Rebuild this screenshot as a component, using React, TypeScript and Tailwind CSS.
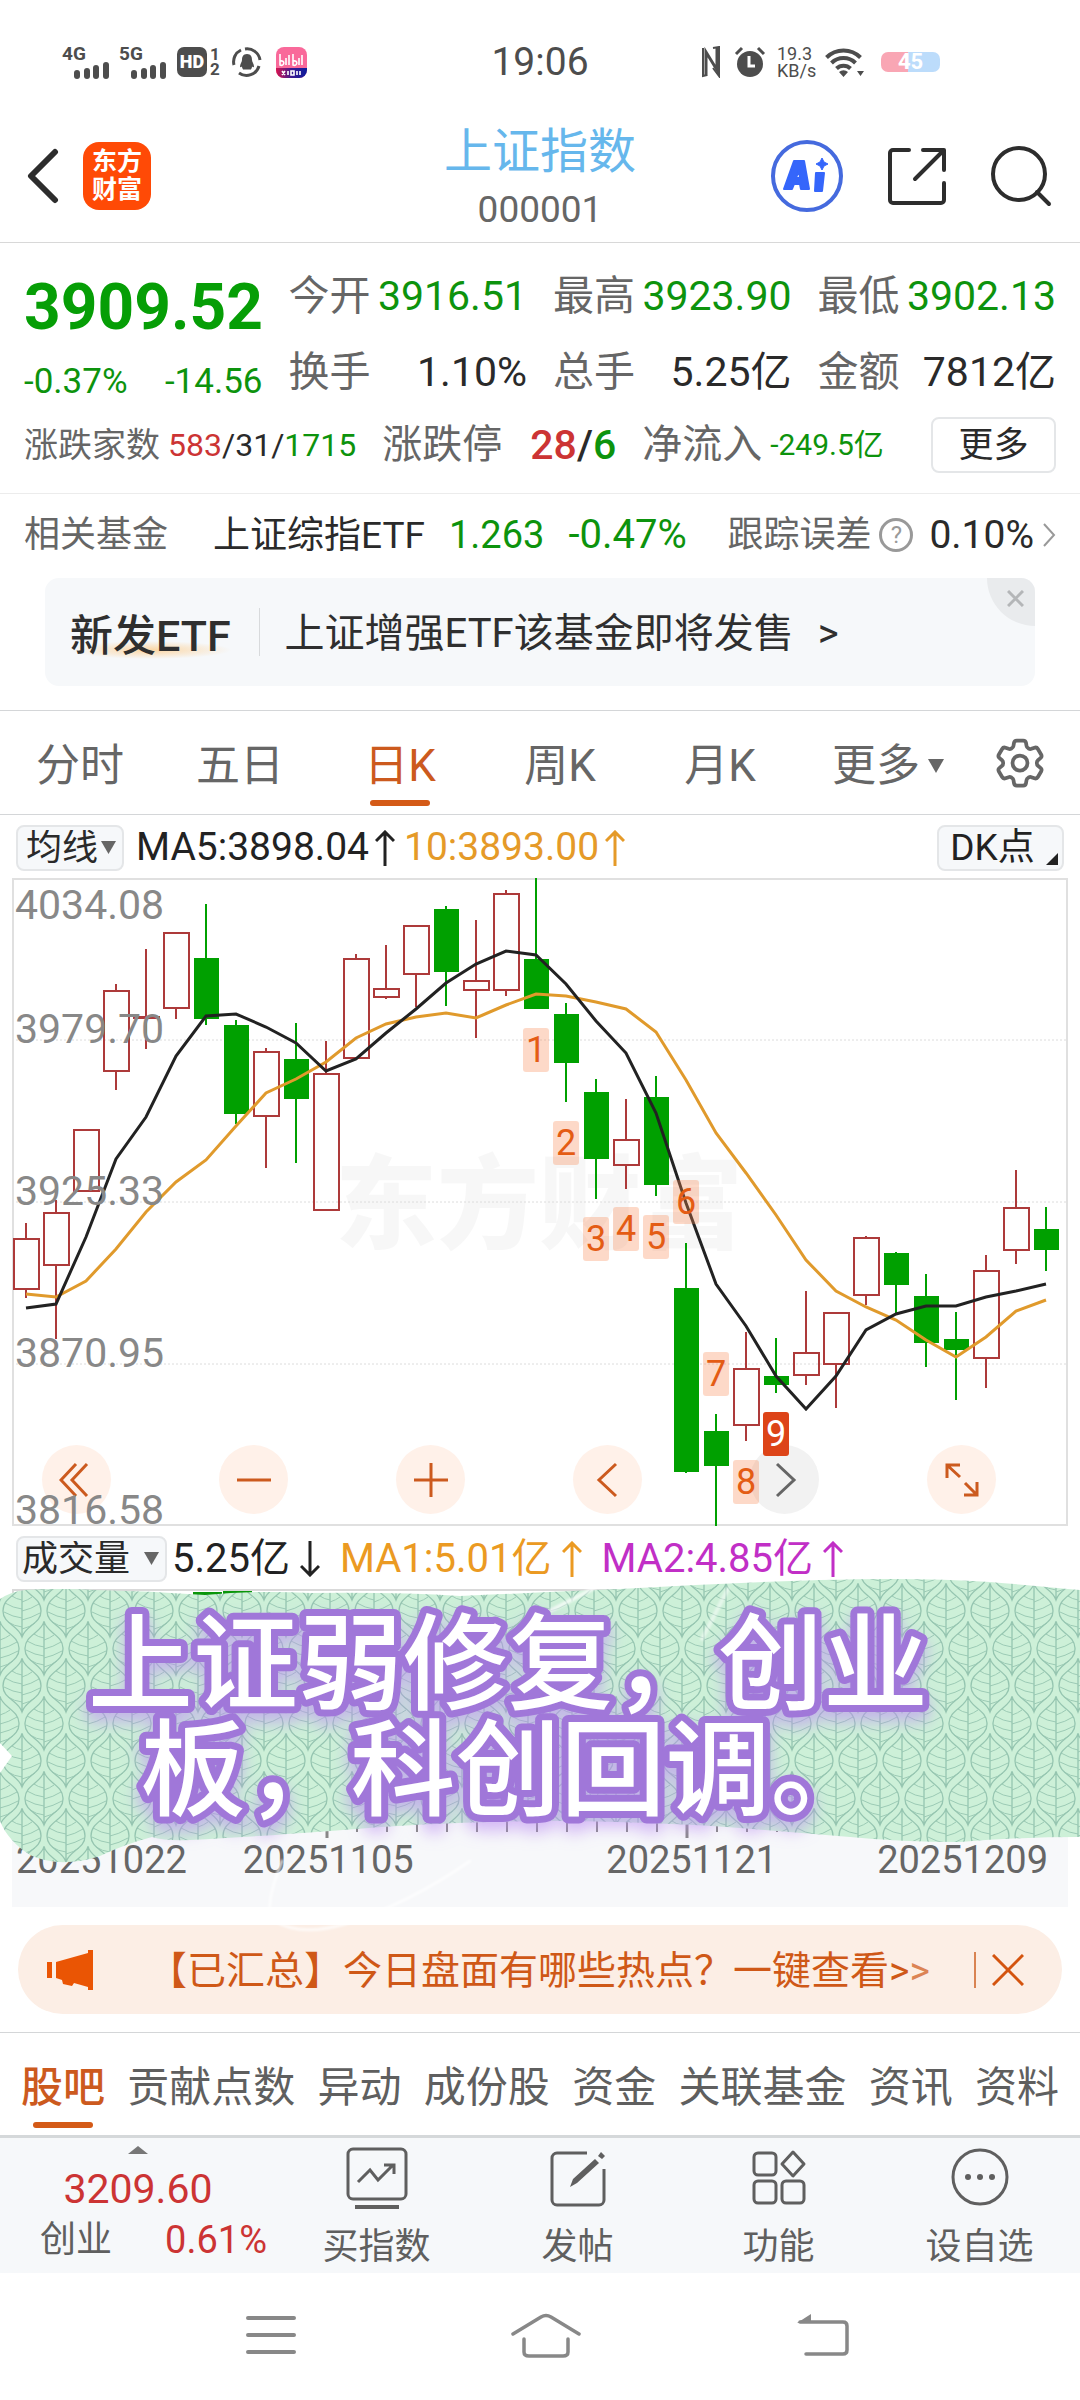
import React, { useState } from 'react'
import { HiOutlineCog6Tooth } from 'react-icons/hi2'

const GREEN = '#00a000'
const RED = '#ad3a3a'

const STEP = 30
const FIRST_X = 14

type Candle = { up: boolean; high: number; top: number; bottom: number; low: number }

const c = (up: boolean, high: number, top: number, bottom: number, low: number): Candle => ({
  up,
  high,
  top,
  bottom,
  low
})

const candles: Candle[] = [
  c(true, 345, 360, 412, 420),
  c(true, 322, 334, 388, 461),
  c(true, 251, 251, 314, 314),
  c(true, 106, 112, 194, 212),
  c(true, 71, 138, 141, 171),
  c(true, 54, 54, 131, 141),
  c(false, 26, 80, 141, 147),
  c(false, 142, 147, 236, 246),
  c(true, 170, 173, 239, 290),
  c(false, 145, 181, 221, 285),
  c(true, 163, 195, 333, 333),
  c(true, 76, 80, 181, 181),
  c(true, 67, 110, 120, 121),
  c(true, 47, 47, 97, 129),
  c(false, 28, 31, 94, 128),
  c(true, 42, 102, 113, 160),
  c(true, 12, 15, 113, 118),
  c(false, 0, 81, 131, 131),
  c(false, 125, 136, 185, 224),
  c(false, 201, 214, 281, 321),
  c(true, 221, 261, 288, 311),
  c(false, 198, 219, 307, 318),
  c(false, 365, 410, 594, 595),
  c(false, 536, 553, 588, 648),
  c(true, 454, 490, 548, 563),
  c(false, 460, 498, 507, 515),
  c(true, 413, 474, 498, 507),
  c(true, 434, 434, 487, 530),
  c(true, 358, 359, 418, 427),
  c(false, 374, 375, 407, 435),
  c(false, 396, 418, 465, 489),
  c(false, 434, 461, 472, 522),
  c(true, 377, 392, 481, 510),
  c(true, 292, 329, 373, 386),
  c(false, 329, 351, 372, 393)
]

const ma5 = [
  430, 426, 359, 281, 239, 178, 138, 136, 149, 165, 193, 181, 155, 131, 105, 86, 73, 77, 106, 143, 175, 235, 325,
  406, 448, 498, 531, 498, 452, 436, 428, 428, 419, 413, 406
]

const ma10 = [
  416, 419, 403, 371, 334, 304, 282, 248, 215, 201, 184, 160, 146, 139, 135, 140, 127, 116, 118, 124, 131, 154, 202,
  255, 295, 337, 382, 413, 429, 442, 462, 479, 459, 433, 422
]

const signals = [
  { n: 1, i: 17, y: 150 },
  { n: 2, i: 18, y: 243 },
  { n: 3, i: 19, y: 339 },
  { n: 4, i: 20, y: 329 },
  { n: 5, i: 21, y: 337 },
  { n: 6, i: 22, y: 302 },
  { n: 7, i: 23, y: 474 },
  { n: 8, i: 24, y: 582 },
  { n: 9, i: 25, y: 534 }
]

const priceLabels = [
  { text: '4034.08', y: 41 },
  { text: '3979.70', y: 165 },
  { text: '3925.33', y: 327 },
  { text: '3870.95', y: 489 },
  { text: '3816.58', y: 646 }
]

const toPoints = (values: number[]) => values.map((y, i) => `${FIRST_X + i * STEP},${y}`).join(' ')

function Signal({ label }: { label: string }) {
  return (
    <div className="flex flex-col">
      <span className="text-[19px] font-bold leading-[16px]">{label}</span>
      <svg width="36" height="17" viewBox="0 0 36 17" fill="currentColor" className="ml-3">
        <rect x="0" y="8" width="6" height="9" rx="3" />
        <rect x="10" y="6" width="6" height="11" rx="3" />
        <rect x="19" y="3" width="6" height="14" rx="3" />
        <rect x="29" y="0" width="6" height="17" rx="3" />
      </svg>
    </div>
  )
}

function StatusBar() {
  return (
    <div className="grid h-[124px] grid-cols-[1fr_auto_1fr] items-center text-[#4d4d4d]">
      <div className="flex items-center pl-[62px]">
        <Signal label="4G" />
        <div className="ml-[9px]">
          <Signal label="5G" />
        </div>
        <div className="ml-[10px] flex h-[30px] w-[30px] items-center justify-center rounded-[7px] bg-[#4d4d4d] text-[18px] font-black leading-none text-white">
          HD
        </div>
        <div className="ml-[3px] flex flex-col text-[17px] font-bold leading-[15px]">
          <span>1</span>
          <span>2</span>
        </div>
        <svg width="30" height="30" viewBox="0 0 30 30" className="ml-3">
          <g fill="none" stroke="currentColor" strokeWidth="3">
            <path d="M2 18A13 13 0 0 1 9 3" />
            <path d="M13 2A13 13 0 0 1 28 13" />
            <path d="M27 19A13 13 0 0 1 7 26" />
          </g>
          <path
            d="M15 7c-4 0-5 3-5 6 0 2-2 4-2 6.500 0 1 1 1 2 0 0 2 1 2 1 3h8c0-1 1-1 1-3 1 1 2 1 2 0 0-2.500-2-4.500-2-6.500 0-3-1-6-5-6z"
            fill="currentColor"
          />
        </svg>
        <svg width="31" height="31" viewBox="0 0 31 31" className="ml-[14px]">
          <defs>
            <linearGradient id="appStripe">
              <stop offset="0" stopColor="#d8144f" />
              <stop offset="0.500" stopColor="#3b1a90" />
              <stop offset="1" stopColor="#0b1c9c" />
            </linearGradient>
            <clipPath id="appClip">
              <rect width="31" height="31" rx="8" />
            </clipPath>
          </defs>
          <g clipPath="url(#appClip)">
            <rect width="31" height="31" fill="#f9699a" />
            <rect y="21" width="31" height="10" fill="url(#appStripe)" />
          </g>
          <g fill="none" stroke="#fff" strokeWidth="1.600">
            <path d="M4 7v11c4 2 6-5 0-4M10 11v7M13 8v10M17 7v11c4 2 6-5 0-4M23 11v7M26 8v10" />
            <path d="M6 24l3 4M9 24l-3 4M12 24v4M15 24v4h3v-4zM21 24v4M24 24v4" />
          </g>
        </svg>
      </div>
      <div className="text-[39px] leading-none">19:06</div>
      <div className="flex items-center justify-end pr-[140px]">
        <svg width="18" height="32" viewBox="0 0 18 32" fill="none" stroke="currentColor" strokeWidth="3">
          <path d="M4 30V6l11 18V1" />
          <path d="M1 2v28l4-1M11 2l6-1v29l-6-8" strokeWidth="2" />
        </svg>
        <svg width="32" height="32" viewBox="0 0 32 32" className="ml-[14px]">
          <circle cx="16" cy="18" r="13" fill="currentColor" />
          <path d="M2 8l6-6M30 8l-6-6" stroke="currentColor" strokeWidth="3" />
          <path d="M15 10v10h6" fill="none" stroke="#fff" strokeWidth="3" />
        </svg>
        <div className="ml-[11px] flex w-[36px] flex-col text-[18px] leading-[17px]">
          <span>19.3</span>
          <span>KB/s</span>
        </div>
        <svg width="40" height="30" viewBox="0 0 40 30" className="ml-3">
          <g fill="none" stroke="currentColor" strokeWidth="4">
            <path d="M1.500 10.500a24 24 0 0 1 34 0" />
            <path d="M6.500 16a17 17 0 0 1 24 0" />
            <path d="M11.500 21.500a10 10 0 0 1 14 0" />
          </g>
          <path d="M14 25a7 7 0 0 1 9 0l-4.500 5zM32 24h7l-3.500 5z" fill="currentColor" />
        </svg>
        <div className="ml-4 flex h-5 w-[59px] items-center justify-center rounded-[7px] bg-linear-to-r from-[#f9a6b4] from-45% to-[#bcdcfb] to-45% text-[22px] font-bold leading-none text-white">
          45
        </div>
      </div>
    </div>
  )
}

function Header() {
  return (
    <header className="grid h-[119px] grid-cols-[1fr_auto_1fr] items-center border-b border-[#d8d8d8] pb-[14px] text-[#2d2d2d]">
      <div className="flex items-center pl-6">
        <button aria-label="返回">
          <svg width="36" height="56" viewBox="0 0 36 56" fill="none" stroke="currentColor" strokeWidth="6">
            <path d="M31 4L7 28l24 24" strokeLinecap="round" strokeLinejoin="round" />
          </svg>
        </button>
        <a
          href="#home"
          className="ml-[23px] flex h-[68px] w-[68px] items-center justify-center rounded-2xl bg-[#ff4a06] text-center text-[25px] font-bold leading-[28px] text-white"
        >
          东方
          <br />
          财富
        </a>
      </div>
      <div className="flex h-[104px] flex-col items-center">
        <h1 className="text-[48px] leading-[56px] text-[#66b7ec]">上证指数</h1>
        <span className="text-[37px] leading-[60px] text-[#666]">000001</span>
      </div>
      <div className="flex items-center justify-end gap-[43px] pr-7">
        <button aria-label="AI">
          <svg width="74" height="74" viewBox="0 0 74 74">
            <circle cx="37" cy="37" r="34" fill="none" stroke="#456ade" strokeWidth="4" />
            <g fill="#3566fb" stroke="#3566fb" strokeWidth="2" strokeLinejoin="round">
              <path
                fillRule="evenodd"
                d="M24 22h10l5 28h-8l-1-5h-6l-2 5h-8zM29 31l-3 8h4z"
              />
              <path d="M46 34h8l-2 18h-7z" />
              <path d="M52 19l2 4 4 2-4 2-2 4-2-4-4-2 4-2z" strokeWidth="1" />
            </g>
          </svg>
        </button>
        <button aria-label="分享">
          <svg width="60" height="60" viewBox="0 0 60 60" fill="none" stroke="currentColor" strokeWidth="4">
            <path d="M22 4H6a3 3 0 0 0-3 3v47a3 3 0 0 0 3 3h48a3 3 0 0 0 3-3V37" strokeLinecap="round" />
            <path d="M36 4h21v20M56 5L28 33" strokeLinecap="round" strokeLinejoin="round" />
          </svg>
        </button>
        <button aria-label="搜索">
          <svg width="62" height="62" viewBox="0 0 62 62" fill="none" stroke="currentColor" strokeWidth="4">
            <circle cx="29" cy="29" r="26" />
            <path d="M47 47l12 12" strokeLinecap="round" />
          </svg>
        </button>
      </div>
    </header>
  )
}

function Stat({ label, value, green }: { label: string; value: string; green?: boolean }) {
  return (
    <div className="flex h-[76px] items-center justify-between pt-1 text-[41px] leading-none">
      <span className="text-[#666]">{label}</span>
      <span className={green ? 'text-[#0d930d]' : 'text-[#2a2a2a]'}>{value}</span>
    </div>
  )
}

function Quote() {
  return (
    <section className="border-b border-[#ececec] px-6 pt-[13px] pb-[11px]">
      <div className="grid grid-cols-4 gap-x-[26px]">
        <div className="text-[#0d930d]">
          <div className="flex h-[100px] items-center pt-1 text-[64px] font-bold leading-none text-[#069e06]">
            3909.52
          </div>
          <div className="flex h-[50px] items-center justify-between text-[35px] leading-none">
            <span>-0.37%</span>
            <span>-14.56</span>
          </div>
        </div>
        <div>
          <Stat label="今开" value="3916.51" green />
          <Stat label="换手" value="1.10%" />
        </div>
        <div>
          <Stat label="最高" value="3923.90" green />
          <Stat label="总手" value="5.25亿" />
        </div>
        <div>
          <Stat label="最低" value="3902.13" green />
          <Stat label="金额" value="7812亿" />
        </div>
      </div>
      <div className="flex h-[74px] items-center gap-[26px] leading-none text-[#666]">
        <div className="flex items-center gap-2">
          <span className="text-[34px]">涨跌家数</span>
          <span className="text-[32px] text-[#0d930d]">
            <span className="text-[#cc3434]">583</span>
            <span className="text-[#2a2a2a]">/31/</span>1715
          </span>
        </div>
        <div className="flex items-center gap-7">
          <span className="text-[40px]">涨跌停</span>
          <span className="text-[41px] font-medium text-[#0d930d]">
            <span className="text-[#cc3434]">28</span>
            <span className="text-[#2a2a2a]">/</span>6
          </span>
        </div>
        <div className="flex items-center gap-2">
          <span className="text-[40px]">净流入</span>
          <span className="text-[30px] text-[#0d930d]">-249.5亿</span>
        </div>
        <button className="ml-auto h-14 w-[125px] rounded-lg border-2 border-[#e4e6e8] text-[35px] leading-none text-[#2a2a2a]">
          更多
        </button>
      </div>
    </section>
  )
}

function FundRow() {
  return (
    <section className="border-b border-[#d4d6d8] pb-6">
      <a href="#fund" className="flex h-20 items-center px-6 pt-[2px] text-[36px] leading-none text-[#666]">
        <span>相关基金</span>
        <span className="ml-[45px] text-[37px] text-[#2a2a2a]">上证综指ETF</span>
        <span className="ml-6 text-[38px] text-[#0d930d]">1.263</span>
        <span className="ml-6 text-[40px] text-[#0d930d]">-0.47%</span>
        <span className="ml-auto">跟踪误差</span>
        <span className="ml-2 flex h-[34px] w-[34px] items-center justify-center rounded-full border-[3px] border-[#999] text-[24px] text-[#999]">
          ?
        </span>
        <span className="ml-4 text-[39px] text-[#2a2a2a]">0.10%</span>
        <svg width="14" height="26" viewBox="0 0 14 26" fill="none" stroke="#999" strokeWidth="2" className="ml-2">
          <path d="M2 2l10 11L2 24" />
        </svg>
      </a>
      <div className="relative mx-[45px] mt-1 flex h-[108px] items-center overflow-hidden rounded-[14px] bg-[#f6f8fa] pl-[25px] leading-none text-[#2f2f2f]">
        <span className="relative pt-2">
          <span className="absolute inset-x-0 top-[34px] h-[18px] bg-radial-[closest-side] from-[#fbd6a4] to-transparent" />
          <span className="relative text-[43px] font-medium">新发ETF</span>
        </span>
        <span className="ml-[28px] h-12 w-px bg-[#d8dadc]" />
        <a href="#etf" className="ml-[25px] pt-1 text-[40px]">
          上证增强ETF该基金即将发售<span className="ml-6">&gt;</span>
        </a>
        <button
          aria-label="关闭"
          className="absolute top-0 right-0 flex h-12 w-12 items-center justify-center rounded-bl-[48px] bg-[#e9ebed] pb-2 pl-2"
        >
          <svg width="17" height="17" viewBox="0 0 17 17" stroke="#b4b6b8" strokeWidth="3">
            <path d="M1 1l15 15M16 1L1 16" />
          </svg>
        </button>
      </div>
    </section>
  )
}

function PeriodTabs() {
  const [active, setActive] = useState('日K')
  return (
    <nav className="grid h-[104px] grid-cols-[repeat(6,1fr)_120px] items-center border-b border-[#d4d6d8] text-[44px] leading-none text-[#666]">
      {['分时', '五日', '日K', '周K', '月K'].map((tab) => (
        <button
          key={tab}
          onClick={() => setActive(tab)}
          className={`relative flex h-full items-center justify-center pt-[6px] ${active === tab ? 'text-[#cc5a1e]' : ''}`}
        >
          {tab}
          {active === tab && <span className="absolute bottom-2 h-[6px] w-[60px] rounded-full bg-[#d45a17]" />}
        </button>
      ))}
      <button className="flex h-full items-center justify-center pt-[6px] pl-4">
        更多
        <svg width="16" height="14" viewBox="0 0 16 14" fill="currentColor" className="ml-2">
          <path d="M0 0h16L8 14z" />
        </svg>
      </button>
      <button aria-label="设置" className="flex justify-center">
        <HiOutlineCog6Tooth size={60} />
      </button>
    </nav>
  )
}

function Arrow({ down }: { down?: boolean }) {
  return (
    <svg width="20" height="36" viewBox="0 0 20 36" fill="none" stroke="currentColor" strokeWidth="3">
      <path d={down ? 'M10 0v34M1 25l9 9 9-9' : 'M10 36V2M1 11l9-9 9 9'} />
    </svg>
  )
}

function Picker({ label, options, wide }: { label: string; options: string[]; wide?: boolean }) {
  return (
    <label className="relative flex items-center">
      <select
        aria-label={label}
        className={`h-[46px] appearance-none rounded-lg border-2 border-[#e4e6e8] bg-[#f6f8fa] text-[36px] leading-none text-[#2a2a2a] ${wide ? 'w-[151px] pl-1' : 'w-[108px] pl-2'}`}
      >
        {options.map((o) => (
          <option key={o}>{o}</option>
        ))}
      </select>
      <svg
        width="15"
        height="13"
        viewBox="0 0 15 13"
        fill="#666"
        className="pointer-events-none absolute right-2"
      >
        <path d="M0 0h15L7.500 13z" />
      </svg>
    </label>
  )
}

function ChartButton({ label, muted, children }: { label: string; muted?: boolean; children: React.ReactNode }) {
  return (
    <button
      aria-label={label}
      className={`flex h-[69px] w-[69px] items-center justify-center rounded-full ${muted ? 'bg-[#f2f2f2] text-[#666]' : 'bg-[#fff1e9] text-[#cc5a1e]'}`}
    >
      <svg width="36" height="36" viewBox="0 0 36 36" fill="none" stroke="currentColor" strokeWidth="3">
        {children}
      </svg>
    </button>
  )
}

function KLineChart() {
  return (
    <div className="relative mx-3">
      <div className="absolute right-[72px] bottom-[12px] left-[30px] flex justify-between">
        <ChartButton label="最早">
          <path d="M17 2L2 18l15 16M28 2L13 18l15 16" />
        </ChartButton>
        <ChartButton label="缩小">
          <path d="M1 18h34" />
        </ChartButton>
        <ChartButton label="放大">
          <path d="M1 18h34M18 1v34" />
        </ChartButton>
        <ChartButton label="左移">
          <path d="M26 2L9 18l17 16" />
        </ChartButton>
        <ChartButton label="右移" muted>
          <path d="M10 2l17 16-17 16" />
        </ChartButton>
        <ChartButton label="全屏">
          <path d="M3 16V3h13M3 3l13 12M33 20v13H20M33 33L21 21" />
        </ChartButton>
      </div>

      <svg viewBox="0 0 1056 648" className="pointer-events-none relative block w-full overflow-visible">
        <text x="323" y="363" fontSize="102" fontWeight="900" fill="#000" fillOpacity="0.03">
          东方财富
        </text>
        <path d="M0 162h1056M0 324h1056M0 486h1056" stroke="#dcdcdc" strokeWidth="1" strokeDasharray="2 2" />
        <rect x="1" y="1" width="1054" height="646" fill="none" stroke="#e0e0e0" strokeWidth="2" />

        {candles.map((k, i) => {
          const x = FIRST_X + i * STEP
          if (!k.up) {
            return (
              <g key={i} fill={GREEN}>
                <rect x={x - 1} y={k.high} width="2" height={k.low - k.high} />
                <rect x={x - 12} y={k.top} width="25" height={k.bottom - k.top} />
              </g>
            )
          }
          return (
            <g key={i} fill="none" stroke={RED} strokeWidth="2">
              <path d={`M${x} ${k.high}V${k.top}M${x} ${k.bottom}V${k.low}`} />
              <rect x={x - 12} y={k.top + 1} width="25" height={Math.max(k.bottom - k.top - 2, 1)} />
            </g>
          )
        })}

        <polyline points={toPoints(ma10)} fill="none" stroke="#e09a2c" strokeWidth="3" />
        <polyline points={toPoints(ma5)} fill="none" stroke="#222" strokeWidth="3" />

        {signals.map((s) => {
          const x = FIRST_X + s.i * STEP
          const last = s.n === 9
          return (
            <g key={s.n}>
              <rect
                x={x - 13}
                y={s.y}
                width="26"
                height="44"
                rx="3"
                fill={last ? '#dd4418' : '#f98a55'}
                fillOpacity={last ? 1 : 0.32}
              />
              <text x={x} y={s.y + 34} fontSize="36" textAnchor="middle" fill={last ? '#fff' : '#e45c14'}>
                {s.n}
              </text>
            </g>
          )
        })}

        {priceLabels.map((p) => (
          <text key={p.text} x="3" y={p.y} fontSize="41" fill="#888">
            {p.text}
          </text>
        ))}
      </svg>
    </div>
  )
}

function MaRow() {
  return (
    <div className="flex h-[63px] items-center px-4 pt-[2px] text-[39px] leading-none">
      <Picker label="指标" options={['均线']} />
      <span className="ml-3 text-[#222]">MA5:3898.04</span>
      <span className="ml-[6px] text-[#222]">
        <Arrow />
      </span>
      <span className="ml-[9px] text-[#e59a28]">10:3893.00</span>
      <span className="ml-[6px] text-[#e59a28]">
        <Arrow />
      </span>
      <button className="relative ml-auto h-[46px] w-[127px] rounded-lg border-2 border-[#e4e6e8] bg-[#f6f8fa] pr-4 text-[37px] leading-none text-[#222]">
        DK点
        <svg width="12" height="12" viewBox="0 0 12 12" className="absolute right-1 bottom-1">
          <path d="M12 0v12H0z" fill="#222" />
        </svg>
      </button>
    </div>
  )
}

function VolumeRow() {
  return (
    <div className="flex h-[63px] items-center px-4 pt-[2px] text-[40px] leading-none">
      <Picker label="副图" options={['成交量']} wide />
      <span className="ml-[5px] text-[#222]">5.25亿</span>
      <span className="ml-[10px] text-[#222]">
        <Arrow down />
      </span>
      <span className="ml-5 text-[#eb9a22]">MA1:5.01亿</span>
      <span className="ml-[10px] text-[#eb9a22]">
        <Arrow />
      </span>
      <span className="ml-5 text-[#c12fc6]">MA2:4.85亿</span>
      <span className="ml-[10px] text-[#c12fc6]">
        <Arrow />
      </span>
    </div>
  )
}

const ticks = Array.from({ length: 16 }, (_, i) => 315 + i * STEP)

function Sticker() {
  return (
    <div className="pointer-events-none absolute inset-x-0 -top-[15px]">
      <svg viewBox="0 1575 1080 375" className="block w-full">
        <defs>
          <g id="leaf" fill="none" stroke="#95c5b0">
            <path
              d="M0-27C-2-15-19-14-19 1C-19 14-4 15 0 27C4 15 19 14 19 1C19-14 2-15 0-27zM0-27V27"
              strokeWidth="1.300"
            />
            <path
              d="M0-10Q-6-11-10-14M0-1Q-9-2-17-7M0 8Q-9 7-18 2M0 17Q-8 16-14 12M0-8Q6-10 10-13M0 1Q9-1 17-6M0 10Q9 8 18 3M0 19Q8 17 13 13"
              strokeWidth="0.900"
            />
          </g>
          <pattern id="leaves" x="22" y="1724" width="44" height="75" patternUnits="userSpaceOnUse">
            <rect width="44" height="75" fill="#cdf0d8" />
            <use href="#leaf" x="22" y="0" />
            <use href="#leaf" x="22" y="75" />
            <use href="#leaf" x="0" y="37" />
            <use href="#leaf" x="44" y="37" />
          </pattern>
          <filter id="soft">
            <feGaussianBlur stdDeviation="1" />
          </filter>
          <filter id="glow" x="-10%" y="-20%" width="120%" height="150%">
            <feDropShadow dx="0" dy="9" stdDeviation="8" floodColor="#bb8cf2" floodOpacity="0.600" />
          </filter>
        </defs>
        <path
          d="M0 1600Q10 1593 25 1591Q60 1589 95 1591Q150 1592 205 1596Q260 1591 310 1594Q400 1593 460 1597Q550 1593 620 1590Q720 1584 820 1581Q920 1578 990 1583Q1040 1587 1080 1591V1838Q1020 1838 960 1843Q900 1843 850 1838L740 1829Q660 1823 560 1822Q440 1822 330 1832Q250 1838 190 1841Q165 1842 152 1838Q125 1845 100 1857Q60 1870 30 1856Q8 1842 0 1822V1774L12 1757L0 1744z"
          fill="url(#leaves)"
        />
        <g fill="none" stroke="#fff" strokeLinecap="round" filter="url(#soft)">
          <path d="M282 1862Q262 1912 275 1922Q300 1938 345 1925Q410 1904 470 1862" strokeWidth="3" opacity="0.700" />
          <path d="M550 1612L600 1586" strokeWidth="4" opacity="0.700" />
          <path d="M702 1640L728 1590" strokeWidth="4" opacity="0.500" />
        </g>
        <g
          fontSize="105"
          fontWeight="500"
          textAnchor="middle"
          fill="#fff"
          stroke="#a077d9"
          strokeWidth="14"
          strokeLinejoin="round"
          paintOrder="stroke"
          filter="url(#glow)"
        >
          <text x="508" y="1702">
            上证弱修复，创业
          </text>
          <text x="508" y="1808">
            板，科创回调。
          </text>
        </g>
      </svg>
    </div>
  )
}

function VolumePane() {
  return (
    <div className="relative mb-[18px]">
      <div className="mx-3 h-[232px] border-2 border-b-0 border-[#d9d9d9] pl-[179px]">
        <div className="flex gap-px">
          <span className="mt-px h-[5px] w-[29px] bg-[#0a960a]" />
          <span className="h-[5px] w-[29px] bg-[#0a960a]" />
        </div>
      </div>
      <div className="mx-3 h-[86px] bg-[#f7f8fa] text-[38px] leading-none text-[#666]">
        <svg viewBox="0 0 1056 20" className="block w-full">
          {ticks.map((x, i) => (
            <path
              key={x}
              d={`M${x} 0V${i === 0 || i === 12 ? 17 : 11}`}
              stroke="#888"
              strokeWidth={i === 0 || i === 12 ? 3 : 2}
            />
          ))}
        </svg>
        <div className="flex pr-5 pl-1">
          <span>20251022</span>
          <span className="ml-14">20251105</span>
          <span className="ml-auto">20251121</span>
          <span className="ml-[100px]">20251209</span>
        </div>
      </div>
      <Sticker />
    </div>
  )
}

function Promo() {
  return (
    <div className="mx-[18px] mb-[18px] flex h-[89px] items-center rounded-full bg-[#fceee5] pr-[38px] pl-[29px] text-[39px] leading-none text-[#cf5817]">
      <svg width="46" height="40" viewBox="0 0 46 40" fill="#ea5504">
        <path d="M0 12h5v16H0zM9 12L41 3V0h5v40h-5v-3l-14-4-2 3-9-2-1-4-6-2z" />
      </svg>
      <a href="#summary" className="ml-[55px] pt-1">
        【已汇总】今日盘面有哪些热点？一键查看&gt;<span className="opacity-70">&gt;</span>
      </a>
      <span className="ml-auto h-9 w-[2px] bg-[#d98352]" />
      <button aria-label="关闭" className="ml-4">
        <svg width="32" height="32" viewBox="0 0 32 32" stroke="#d4540f" strokeWidth="3">
          <path d="M1 1l30 30M31 1L1 31" />
        </svg>
      </button>
    </div>
  )
}

function SectionTabs() {
  const [active, setActive] = useState('股吧')
  return (
    <nav className="flex h-[103px] items-center justify-between border-t border-[#d4d6d8] px-[21px] text-[42px] leading-none text-[#5f5f5f]">
      {['股吧', '贡献点数', '异动', '成份股', '资金', '关联基金', '资讯', '资料'].map((tab) => (
        <button
          key={tab}
          onClick={() => setActive(tab)}
          className={`relative flex h-full items-center justify-center pt-2 ${active === tab ? 'font-medium text-[#cc5a1e]' : ''}`}
        >
          {tab}
          {active === tab && <span className="absolute bottom-[7px] h-[6px] w-[60px] rounded-full bg-[#d45a17]" />}
        </button>
      ))}
    </nav>
  )
}

function ActionItem({ label, children }: { label: string; children: React.ReactNode }) {
  return (
    <button className="flex flex-1 flex-col items-center pt-[7px] text-[36px] leading-none text-[#5f5f5f]">
      <svg width="64" height="64" viewBox="0 0 64 64" fill="none" stroke="currentColor" strokeWidth="3">
        {children}
      </svg>
      <span className="mt-5">{label}</span>
    </button>
  )
}

function ActionBar() {
  return (
    <div className="flex h-[138px] border-t-[3px] border-[#d5d8da] bg-[#f6f8fa]">
      <button className="flex w-[276px] flex-col items-center leading-none text-[#cc3434]">
        <svg width="20" height="8" viewBox="0 0 20 8" fill="#777" className="mt-2">
          <path d="M0 8L10 0l10 8z" />
        </svg>
        <span className="mt-[15px] text-[41px]">3209.60</span>
        <span className="mt-[11px] flex w-full items-center justify-between pr-[9px] pl-10 text-[38px]">
          <span className="text-[36px] text-[#5f5f5f]">创业</span>
          0.61%
        </span>
      </button>
      <ActionItem label="买指数">
        <rect x="3" y="4" width="58" height="50" rx="5" />
        <path d="M10 62h44" strokeWidth="4" />
        <path d="M13 37l12-12 8 10 15-15M39 20h10v9" />
      </ActionItem>
      <ActionItem label="发帖">
        <path d="M41 8H11a5 5 0 0 0-5 5v42a5 5 0 0 0 5 5h42a5 5 0 0 0 5-5V24" />
        <path d="M24 42l3-8 22-20 4 4-22 20zM52 11l3-4 4 4-3 3z" fill="currentColor" stroke="none" />
      </ActionItem>
      <ActionItem label="功能">
        <rect x="7" y="8" width="22" height="22" rx="4" />
        <path d="M46 7l11 12-11 12-11-12z" strokeLinejoin="round" />
        <rect x="7" y="36" width="22" height="22" rx="4" />
        <rect x="35" y="36" width="22" height="22" rx="4" />
      </ActionItem>
      <ActionItem label="设自选">
        <circle cx="32" cy="32" r="27" />
        <g fill="currentColor" stroke="none">
          <circle cx="20" cy="32" r="3" />
          <circle cx="32" cy="32" r="3" />
          <circle cx="44" cy="32" r="3" />
        </g>
      </ActionItem>
    </div>
  )
}

function SystemNav() {
  return (
    <div className="flex h-[126px] items-center justify-between pr-[230px] pl-[246px] text-[#888]">
      <button aria-label="最近任务">
        <svg width="50" height="44" viewBox="0 0 50 44" stroke="currentColor" strokeWidth="4" strokeLinecap="round">
          <path d="M2 4h46M2 21h46M2 38h46" />
        </svg>
      </button>
      <button aria-label="主屏幕">
        <svg width="72" height="48" viewBox="0 0 72 48" fill="none" stroke="currentColor" strokeWidth="3.500">
          <path d="M3 22L31 5q5-3 10 0l28 17" strokeLinecap="round" />
          <path d="M14 27v13q0 4 5 4h34q5 0 5-4V27" strokeLinecap="round" />
        </svg>
      </button>
      <button aria-label="返回上一页">
        <svg width="54" height="44" viewBox="0 0 54 44" fill="none" stroke="currentColor" strokeWidth="3.500">
          <path d="M4 8h43q4 0 4 4v24q0 4-4 4H10" strokeLinecap="round" />
          <path d="M1 9L15 0v9z" fill="currentColor" stroke="none" />
        </svg>
      </button>
    </div>
  )
}

export default function App() {
  return (
    <div className="min-h-screen bg-white font-[Roboto,'Noto_Sans_CJK_SC',sans-serif] whitespace-nowrap" lang="zh-CN">
      <StatusBar />
      <Header />
      <Quote />
      <FundRow />
      <PeriodTabs />
      <MaRow />
      <KLineChart />
      <VolumeRow />
      <VolumePane />
      <Promo />
      <SectionTabs />
      <ActionBar />
      <SystemNav />
    </div>
  )
}
